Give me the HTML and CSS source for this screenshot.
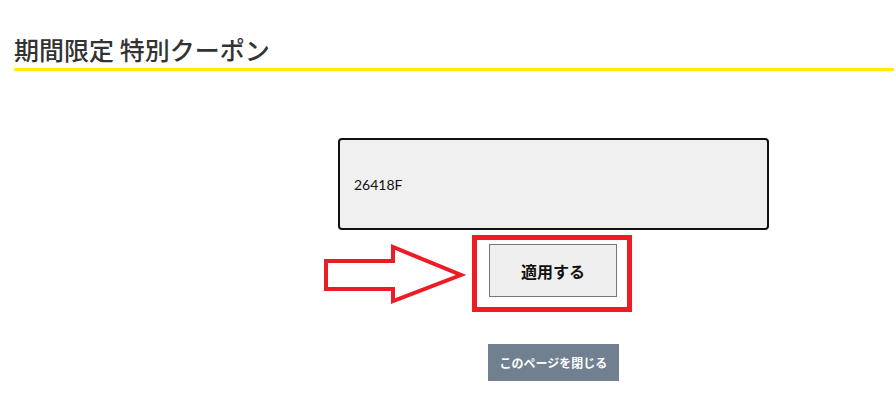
FILE: index.html
```html
<!DOCTYPE html>
<html lang="ja">
<head>
    <meta charset="UTF-8">
    <meta name="viewport" content="width=device-width, initial-scale=1.0">
    <title>期間限定 特別クーポン</title>
    <link rel="stylesheet" href="styles.css">
</head>
<body>
    <main class="page">
        <h1 class="titulo">期間限定 特別クーポン</h1>

        <div class="cupom">
            <!-- campo do codigo -->
            <input type="text" class="cupomCodigo" name="nmCupom" id="idCupom" value="26418F">

            <!-- botao com moldura vermelha + seta -->
            <div class="moldura">
                <svg class="seta" width="146" height="62" viewBox="0 0 146 62">
                    <polygon points="4,18 71,18 71,4 139,32 71,58 71,46 4,46" fill="none" stroke="#ed1c24" stroke-width="4" stroke-linejoin="miter"/>
                </svg>
                <button type="button" class="btnAplicar">適用する</button>
            </div>

            <button type="button" class="btnFechar">このページを閉じる</button>
        </div>
    </main>
</body>
</html>
```

FILE: styles.css
```css
* {
    margin: 0;
    padding: 0;
    box-sizing: border-box;
}

body {
    background-color: white;
    font-family: "Noto Sans CJK JP", "Noto Sans", sans-serif;
    color: #333;
}

.page {
    padding-left: 14px;
}

.titulo {
    font-size: 25px;
    font-weight: 500;
    line-height: 35px;
    padding-top: 32px;
    padding-bottom: 1px;
    border-bottom: 3px solid #ffee00;
}

.cupom {
    margin-left: 324px;
    width: 431px;
    margin-top: 67px;
    display: flex;
    flex-direction: column;
    align-items: center;
}

.cupomCodigo {
    width: 100%;
    height: 92px;
    border: 2px solid #111;
    border-radius: 4px;
    background-color: #f0f0f0;
    padding-left: 14px;
    font-family: "Lato", "Noto Sans", sans-serif;
    font-size: 14px;
    color: #111;
}

.moldura {
    position: relative;
    margin-top: 5px;
    margin-right: 3px;
    border: 5px solid #ed1c24;
    padding: 4px 10px 10px 12px;
}

.seta {
    position: absolute;
    left: -155px;
    top: 3px;
}

.btnAplicar {
    display: block;
    width: 128px;
    height: 53px;
    background-color: #efefef;
    border: 1px solid #767676;
    font-family: "Noto Sans CJK JP", sans-serif;
    font-size: 16px;
    font-weight: bold;
    color: #111;
}

.btnFechar {
    margin-top: 32px;
    width: 131px;
    height: 37px;
    background-color: #708090;
    border: 0;
    color: white;
    font-family: "Noto Sans CJK JP", sans-serif;
    font-size: 12px;
    font-weight: bold;
}
```
